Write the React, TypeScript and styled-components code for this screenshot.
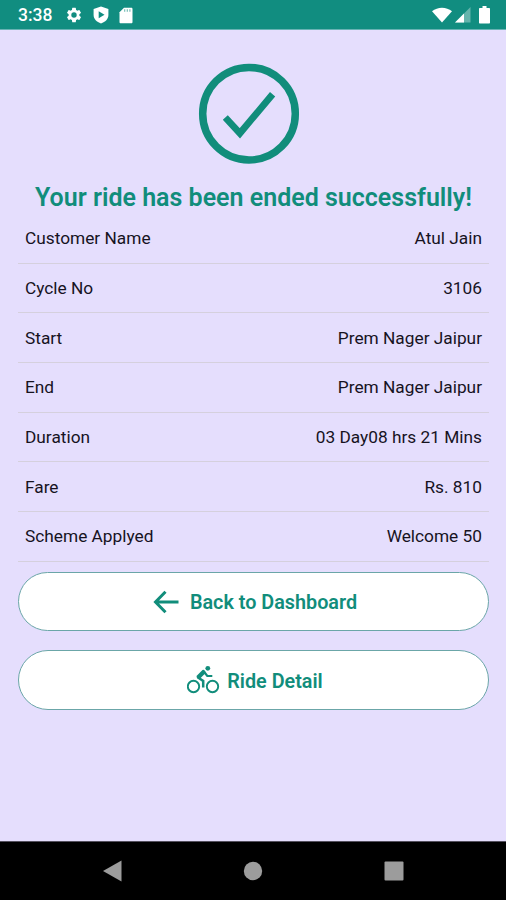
import React from "react";
import styled, { createGlobalStyle } from "styled-components";

const GREEN = "#118d7b";

const GlobalStyle = createGlobalStyle`
  * { box-sizing: border-box; }
  body { margin: 0; font-family: Roboto, "Liberation Sans", sans-serif; }
`;

const Screen = styled.div`
  display: flex;
  flex-direction: column;
  width: 506px;
  height: 900px;
  overflow: hidden;
  background: #e5defd;
`;

const StatusBar = styled.header`
  display: flex;
  align-items: center;
  justify-content: space-between;
  flex: none;
  height: 30px;
  padding: 1px 16px 0 18px;
  color: #fff;
  background: #118d80;
  border-bottom: 1px solid #69b3b4;
`;

const StatusGroup = styled.div<{ $gap: number }>`
  display: flex;
  align-items: center;
  gap: ${(p) => p.$gap}px;
`;

const Clock = styled.span`
  width: 40px;
  margin-right: -3px;
  font-size: 17.5px;
  font-weight: 500;
  line-height: 20px;
  white-space: nowrap;
`;

const Icon = styled.svg`
  display: block;
  flex: none;
`;

const Content = styled.main`
  display: flex;
  flex: 1;
  flex-direction: column;
  padding: 33px 17px 0 18px;
`;

const SuccessMark = styled(Icon)`
  align-self: center;
  margin-right: 9px;
`;

const Title = styled.h1`
  margin: 17px 0 0;
  height: 31px;
  color: ${GREEN};
  font-size: 25px;
  font-weight: 600;
  line-height: 31px;
  text-align: center;
  white-space: nowrap;
`;

const Details = styled.dl`
  margin: 1px 0 10px;
`;

const DetailRow = styled.div`
  display: flex;
  align-items: center;
  justify-content: space-between;
  height: 49.7px;
  padding: 0 7px 0.4px 7px;
  border-bottom: 1px solid #d5d0dd;
  color: #17131f;
  font-size: 17.3px;
  line-height: 22px;
`;

const Label = styled.dt``;

const Value = styled.dd`
  margin: 0;
`;

const Actions = styled.div`
  display: flex;
  flex-direction: column;
  gap: 19px;
`;

const PillButton = styled.button<{ $gap: number }>`
  display: flex;
  align-items: center;
  justify-content: center;
  gap: ${(p) => p.$gap}px;
  width: 100%;
  height: 59.5px;
  padding: 2px 0 0 3px;
  border: 1px solid #6ba6a8;
  border-radius: 30px;
  background: #fff;
  color: ${GREEN};
  font-family: inherit;
  font-size: 19.8px;
  font-weight: 600;
  white-space: nowrap;

  svg {
    margin-top: -2px;
  }
`;

const NavBar = styled.nav`
  display: flex;
  align-items: center;
  justify-content: space-between;
  flex: none;
  height: 59px;
  padding: 0 102px;
  border-top: 1px solid #55515f;
  background: #000;
`;

const details = [
  ["Customer Name", "Atul Jain"],
  ["Cycle No", "3106"],
  ["Start", "Prem Nager Jaipur"],
  ["End", "Prem Nager Jaipur"],
  ["Duration", "03 Day08 hrs 21 Mins"],
  ["Fare", "Rs. 810"],
  ["Scheme Applyed", "Welcome 50"],
];

const GearIcon = () => (
  <Icon width="18" height="18" viewBox="0 0 24 24" fill="currentColor">
    <path d="M19.14 12.94c.04-.3.06-.61.06-.94s-.02-.64-.07-.94l2.03-1.58a.49.49 0 0 0 .12-.61l-1.92-3.32a.49.49 0 0 0-.59-.22l-2.39.96a7 7 0 0 0-1.62-.94l-.36-2.54a.48.48 0 0 0-.48-.41h-3.84a.48.48 0 0 0-.47.41l-.36 2.54c-.59.24-1.13.57-1.62.94l-2.39-.96a.48.48 0 0 0-.59.22L2.74 8.87a.48.48 0 0 0 .12.61l2.03 1.58a6 6 0 0 0 0 1.88l-2.03 1.58a.49.49 0 0 0-.12.61l1.92 3.32c.12.22.37.29.59.22l2.39-.96c.5.38 1.03.7 1.62.94l.36 2.54c.05.24.24.41.48.41h3.84c.24 0 .44-.17.47-.41l.36-2.54a7 7 0 0 0 1.62-.94l2.39.96c.22.08.47 0 .59-.22l1.92-3.32a.48.48 0 0 0-.12-.61zM12 15.6a3.6 3.6 0 1 1 0-7.2 3.6 3.6 0 0 1 0 7.2z" />
  </Icon>
);

const ShieldIcon = () => (
  <Icon width="16" height="18" viewBox="0 0 16 18">
    <path d="M8 .5 15.4 3v6c0 4.200-3.100 6.900-7.400 8.500C3.700 15.900.6 13.200.6 9V3z" fill="currentColor" />
    <path d="M5.700 5.200v7l5.800-3.500z" fill="#118d80" />
  </Icon>
);

const CardIcon = () => (
  <Icon width="14" height="17" viewBox="0 0 14 17">
    <path d="M5 .8h7.200c.8 0 1.300.5 1.300 1.300v12.800c0 .8-.5 1.300-1.300 1.300H1.800c-.8 0-1.300-.5-1.300-1.300V5.300z" fill="currentColor" />
    <path d="M5.700 2.200v2.600M8.300 2.200v2.600M10.900 2.200v2.600" stroke="#118d80" strokeWidth="1.100" opacity=".6" />
  </Icon>
);

const WifiIcon = () => (
  <Icon width="20" height="16" viewBox="0 0 20 16">
    <path d="M0 4.300C5.700-.4 14.300-.4 20 4.300L10 15.500z" fill="currentColor" />
  </Icon>
);

const SignalIcon = () => (
  <Icon width="16" height="16" viewBox="0 0 16 16">
    <path d="M0 15.500 15.500 0v15.500z" fill="currentColor" opacity=".35" />
    <path d="M0 15.500 9 6.500v9z" fill="currentColor" />
  </Icon>
);

const BatteryIcon = () => (
  <Icon width="11" height="18" viewBox="0 0 11 18">
    <path d="M3.500 0h4v2H10c.6 0 1 .4 1 1v13.500c0 .6-.4 1-1 1H1c-.6 0-1-.4-1-1V3c0-.6.4-1 1-1h2.500z" fill="currentColor" />
  </Icon>
);

const ArrowIcon = () => (
  <Icon width="26" height="24" viewBox="0 0 26 24" fill="none" stroke="currentColor" strokeWidth="3">
    <path d="M25.500 12H2.500M12.500 1.700 2.500 12l10 10.300" />
  </Icon>
);

const CyclistIcon = () => (
  <Icon width="34" height="30" viewBox="0 0 34 30" fill="none" stroke="currentColor">
    <circle cx="6.500" cy="21.500" r="5.700" strokeWidth="1.900" />
    <circle cx="25.500" cy="21.500" r="5.700" strokeWidth="1.900" />
    <circle cx="20.800" cy="3.300" r="2.400" fill="currentColor" stroke="none" />
    <path d="M16.300 7.200 11.800 11.700" strokeWidth="4.400" strokeLinecap="round" />
    <path d="m16.800 6.500 3.500 4.500h5" strokeWidth="2.200" />
    <path d="m11 12.500 5.200 3.500v6.500" strokeWidth="2.500" />
  </Icon>
);

export default function App() {
  return (
    <Screen>
      <GlobalStyle />
      <StatusBar>
        <StatusGroup $gap={10}>
          <Clock>3:38</Clock>
          <GearIcon />
          <ShieldIcon />
          <CardIcon />
        </StatusGroup>
        <StatusGroup $gap={3}>
          <WifiIcon />
          <SignalIcon />
          <Icon width="2" height="1" />
          <BatteryIcon />
        </StatusGroup>
      </StatusBar>
      <Content>
        <SuccessMark width="102" height="102" viewBox="0 0 102 102" fill="none" stroke={GREEN}>
          <circle cx="51" cy="50.700" r="46.300" strokeWidth="7.500" />
          <path d="M27.300 54.500 41.900 70.300 74.600 31.200" strokeWidth="6.800" />
        </SuccessMark>
        <Title>Your ride has been ended successfully!</Title>
        <Details>
          {details.map(([label, value]) => (
            <DetailRow key={label}>
              <Label>{label}</Label>
              <Value>{value}</Value>
            </DetailRow>
          ))}
        </Details>
        <Actions>
          <PillButton $gap={11}>
            <ArrowIcon />
            Back to Dashboard
          </PillButton>
          <PillButton $gap={6}>
            <CyclistIcon />
            Ride Detail
          </PillButton>
        </Actions>
      </Content>
      <NavBar>
        <Icon width="20" height="22" viewBox="0 0 20 22">
          <path d="M1 11 19.500.6v20.800z" fill="#9c9c9c" />
        </Icon>
        <Icon width="20" height="20" viewBox="0 0 20 20">
          <circle cx="10" cy="10" r="9.200" fill="#9c9c9c" />
        </Icon>
        <Icon width="20" height="20" viewBox="0 0 20 20">
          <rect x=".5" y=".5" width="19" height="19" rx="1" fill="#9c9c9c" />
        </Icon>
      </NavBar>
    </Screen>
  );
}
